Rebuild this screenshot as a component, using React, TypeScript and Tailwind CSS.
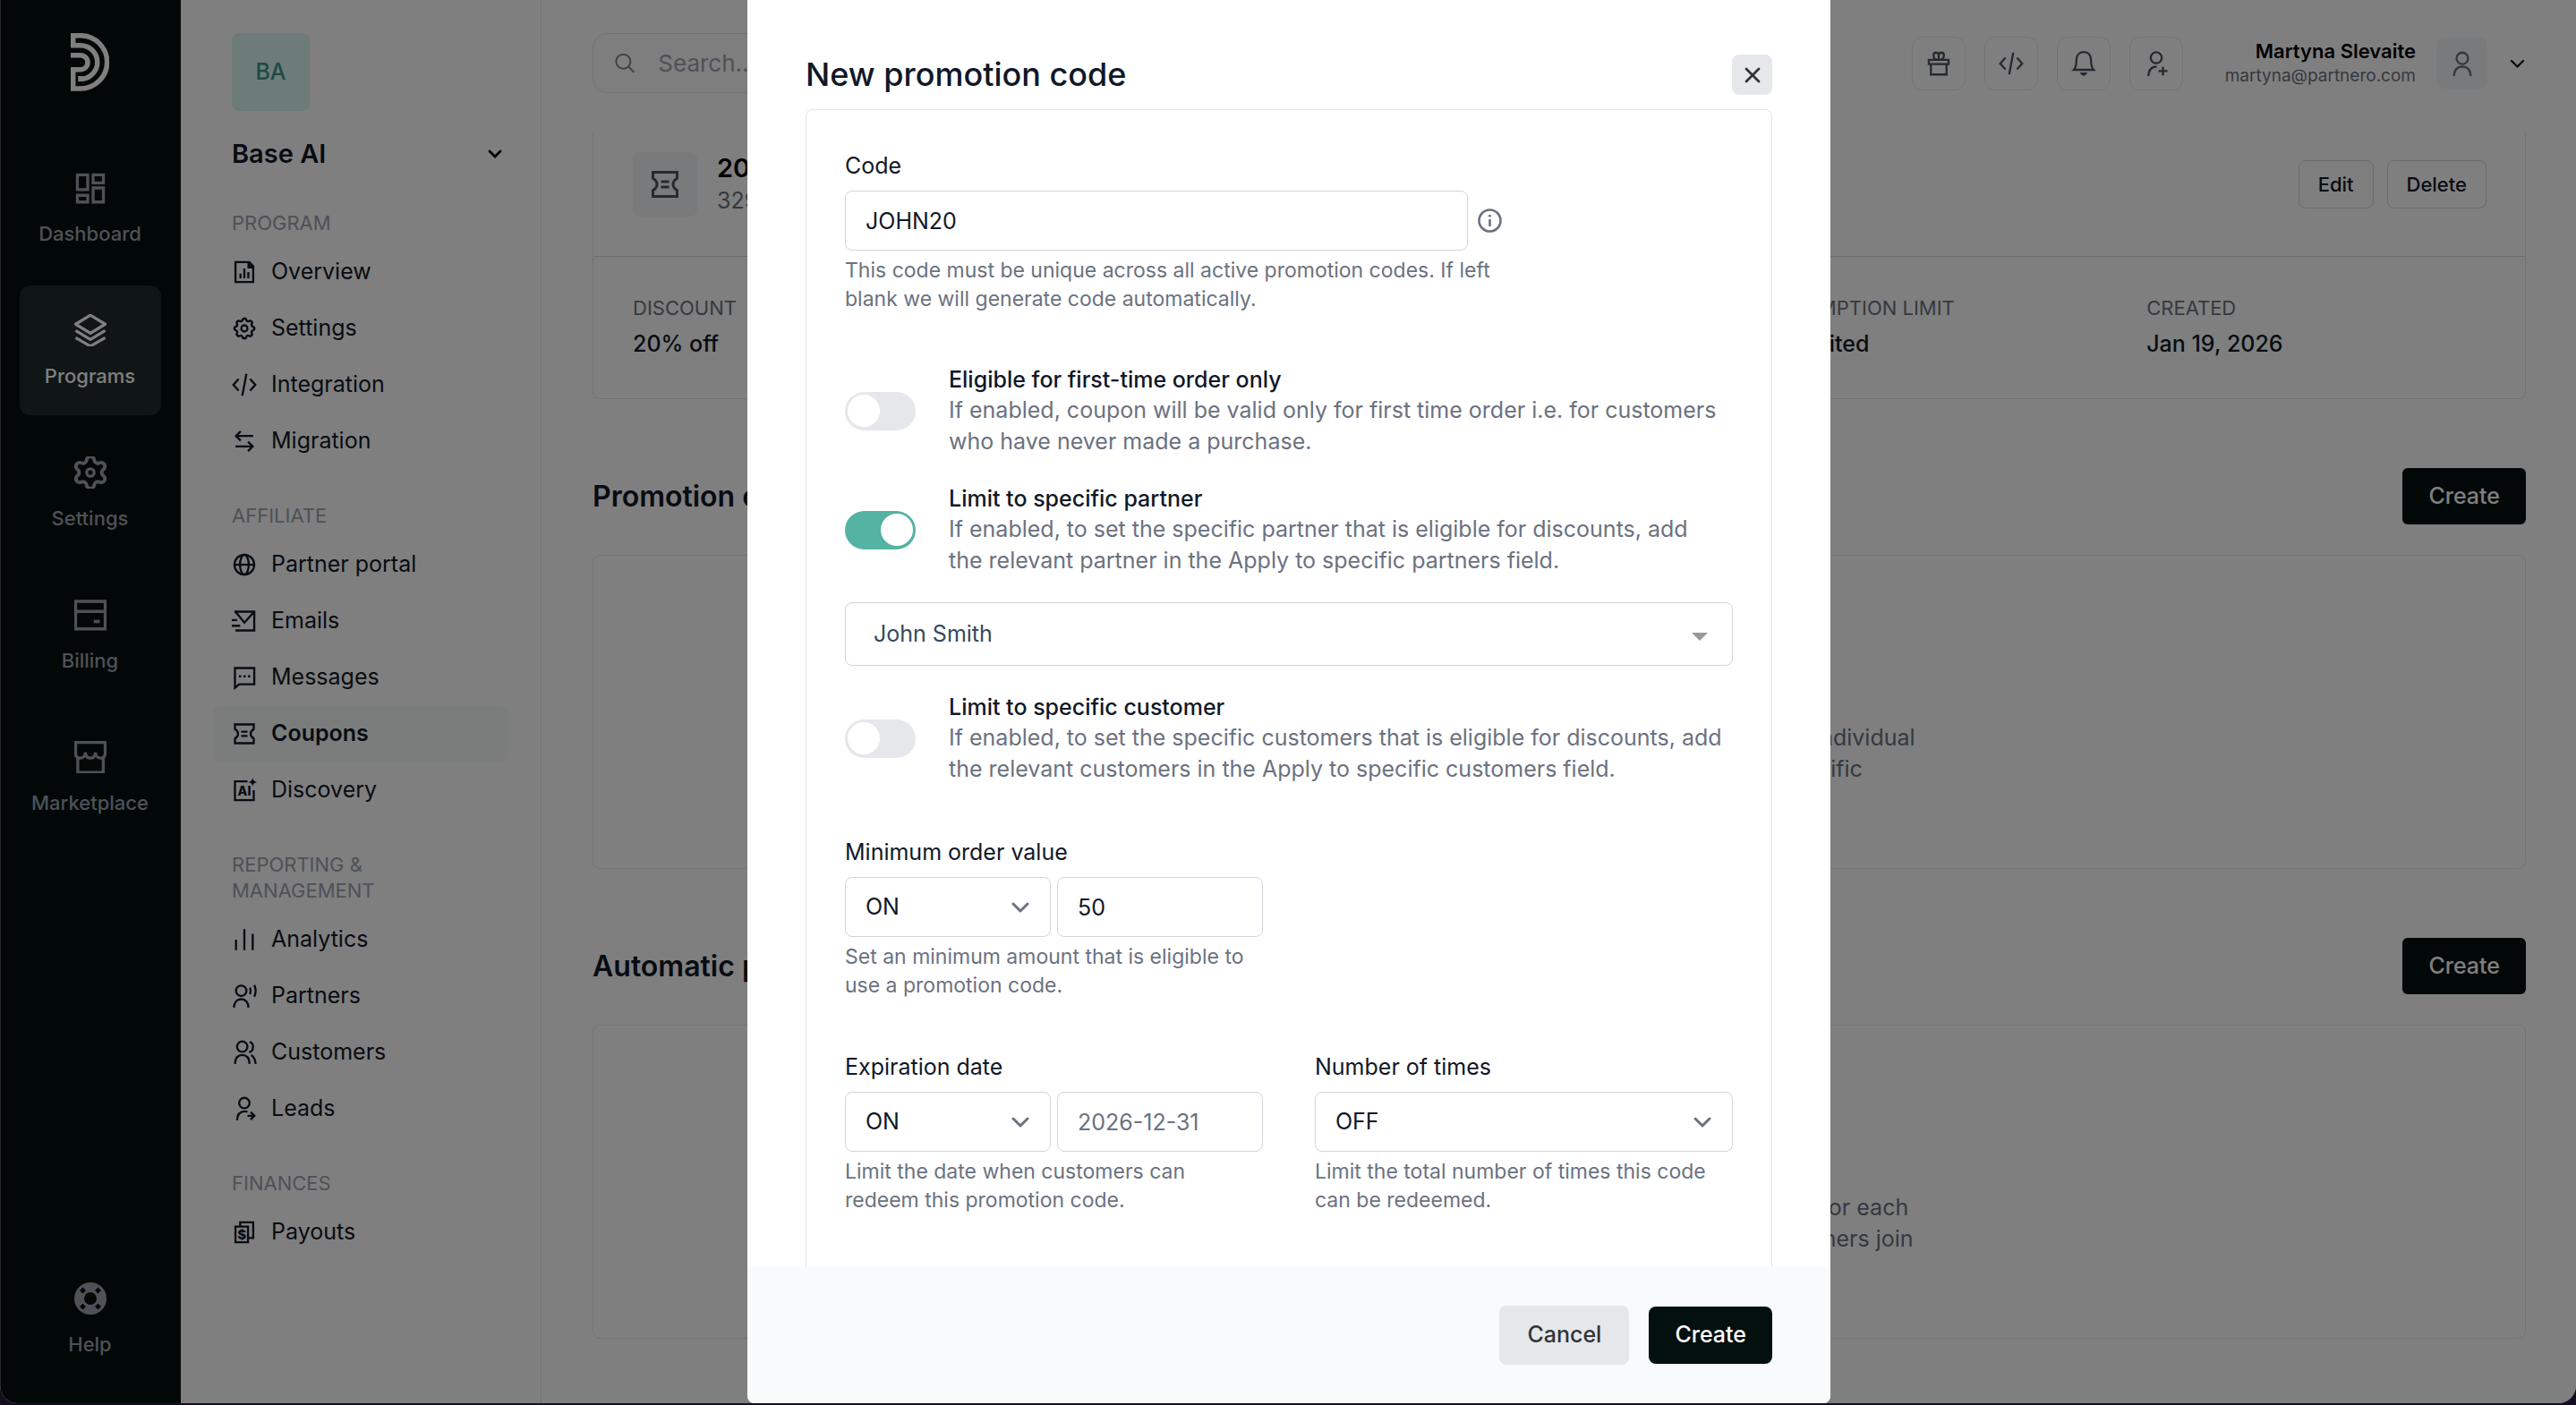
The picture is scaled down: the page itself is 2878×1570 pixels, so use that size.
import { useId, useState } from "react";
import type { ReactNode } from "react";

type IconProps = { children: ReactNode; size?: string; width?: number };

const Icon = ({ children, size = "size-7", width = 2 }: IconProps) => (
  <svg
    viewBox="0 0 24 24"
    fill="none"
    stroke="currentColor"
    strokeWidth={width}
    className={`${size} shrink-0`}
    aria-hidden="true"
  >
    {children}
  </svg>
);

const ticket = (
  <>
    <path d="M3 3h18v4.5c-2.200 1.300-3 2.700-3 4.500s.8 3.200 3 4.500V21H3v-4.500c2.200-1.300 3-2.700 3-4.500s-.8-3.200-3-4.500z" />
    <path d="M9 10h6M9 14h6" />
  </>
);

const code = <path d="m6.500 6.500-5 5.500 5 5.500M17.500 6.500l5 5.500-5 5.500M14 1.500 10 22.500" />;

const icons = {
  overview: (
    <>
      <path d="M3.500 2.500h13.300l3.700 3.800v15.200h-17z" />
      <path d="M16 2.500v5h4.500" fill="currentColor" />
      <path d="M8.300 13.500V18M12 8.500V18M15.800 12v6" />
    </>
  ),
  settings: (
    <>
      <path
        d="M10.325 4.317c.426 -1.756 2.924 -1.756 3.35 0a1.724 1.724 0 0 0 2.573 1.066c1.543 -.94 3.31 .826 2.37 2.37a1.724 1.724 0 0 0 1.065 2.572c1.756 .426 1.756 2.924 0 3.35a1.724 1.724 0 0 0 -1.066 2.573c.94 1.543 -.826 3.31 -2.37 2.37a1.724 1.724 0 0 0 -2.572 1.065c-.426 1.756 -2.924 1.756 -3.35 0a1.724 1.724 0 0 0 -2.573 -1.066c-1.543 .94 -3.31 -.826 -2.37 -2.37a1.724 1.724 0 0 0 -1.065 -2.572c-1.756 -.426 -1.756 -2.924 0 -3.35a1.724 1.724 0 0 0 1.066 -2.573c-.94 -1.543 .826 -3.31 2.37 -2.37c1 .608 2.296 .07 2.572 -1.065z"
        transform="translate(-.8 -.8) scale(1.07)"
      />
      <circle cx="12" cy="12" r="3" />
    </>
  ),
  code,
  migration: <path d="M20.500 7H4M8.500 2.500 4 7l4.500 4.500M3.500 17H20M15.500 12.500 20 17l-4.500 4.500" />,
  globe: (
    <>
      <circle cx="12" cy="12" r="9.500" />
      <ellipse cx="12" cy="12" rx="4.200" ry="9.500" />
      <path d="M2.500 12h19" />
    </>
  ),
  emails: (
    <>
      <path d="M3.500 3h18v18h-18M3.500 3 12 13.500 21.500 3M0 11h5M0 16.500h8" />
      <path d="M3.500 2v2.500" />
    </>
  ),
  messages: (
    <>
      <path d="M3 3h18.500v15.500H7L3 22z" />
      <path d="M6.800 11h2.200M11.100 11h2.200M15.400 11h2.200" strokeWidth="2.200" />
    </>
  ),
  coupons: ticket,
  discovery: (
    <>
      <path d="M15 3.500H3v18h18V12" />
      <path
        d="M20 0c.4 2.600 1.400 3.600 4 4.200-2.600.6-3.600 1.600-4 4.200-.4-2.600-1.400-3.600-4-4.200 2.600-.6 3.600-1.600 4-4.200z"
        fill="currentColor"
        stroke="none"
      />
      <text x="12" y="17" fontSize="12" fontWeight="800" textAnchor="middle" fill="currentColor" stroke="none">
        AI
      </text>
    </>
  ),
  analytics: <path d="M4 12v10M12 2v20M20 6.500V22" />,
  partners: (
    <>
      <circle cx="9" cy="7" r="5" />
      <path d="M2 23c.3-5 3-8 7-8s6.700 3 7 8" />
      <path d="M17.300 4c.9 2 .9 4.300 0 6.300M21.500 1.500c1.700 3.600 1.700 7.500 0 11.200" />
    </>
  ),
  customers: (
    <>
      <circle cx="10" cy="6.500" r="5" />
      <path d="M3 23c.3-5.500 3-8.500 7-8.500s6.700 3 7 8.500M17 2c4.500 1 4.500 8.500-.5 10M18.500 14.500c2.500 1.500 4 4.500 4.300 8.500" />
    </>
  ),
  leads: (
    <>
      <circle cx="12" cy="6.500" r="5" />
      <path d="M5 23c.3-5.500 3-8.500 7.500-8.500 1 0 1.700.2 2.500.5M15 18.700h6.500M18 15l3.700 3.700L18 22.400" />
    </>
  ),
  payouts: (
    <>
      <path d="M3.500 6.500h12v15h-12z" />
      <path d="M8 6.500v-4h12.500v15h-5" />
      <text x="9.600" y="18.600" fontSize="13" fontWeight="800" textAnchor="middle" fill="currentColor" stroke="none">
        $
      </text>
    </>
  ),
};

const railItems = [
  {
    label: "Dashboard",
    icon: <path d="M2.300 2.300H10v11H2.300zM14 2.300h7.700v6H14zM2.300 17.500H10v5H2.300zM14 12h7.700v10.500H14z" />,
  },
  {
    label: "Programs",
    active: true,
    icon: (
      <path
        d="m12 .8 11 6.700-11 6.700L1 7.500zM1 12.300l11 6.600 11-6.600M1 17.600l11 6.300 11-6.300"
        strokeLinejoin="round"
      />
    ),
  },
  {
    label: "Settings",
    icon: (
      <>
        <path
          d="M9.671 4.136a2.340 2.340 0 0 1 4.659 0 2.340 2.340 0 0 0 3.319 1.915 2.340 2.340 0 0 1 2.330 4.033 2.340 2.340 0 0 0 0 3.831 2.340 2.340 0 0 1-2.330 4.033 2.340 2.340 0 0 0-3.319 1.915 2.340 2.340 0 0 1-4.659 0 2.340 2.340 0 0 0-3.320-1.915 2.340 2.340 0 0 1-2.330-4.033 2.340 2.340 0 0 0 0-3.831A2.340 2.340 0 0 1 6.350 6.051a2.340 2.340 0 0 0 3.319-1.915"
          transform="translate(-2.400 -2.400) scale(1.200)"
        />
        <circle cx="12" cy="12" r="2.800" />
      </>
    ),
  },
  {
    label: "Billing",
    icon: (
      <>
        <path d="M1 2h22v20.500H1zM1 9.500h22" />
        <path d="M14.500 17h4.500" strokeWidth="2.400" />
      </>
    ),
  },
  {
    label: "Marketplace",
    icon: (
      <path d="M1 1h22v8c0 2.600-1.300 3.800-3.300 3.800-2.300 0-3.800-1.700-3.900-4.300-.2 2.600-1.500 4.300-3.800 4.300S8.400 11.100 8.200 8.500c-.1 2.600-1.600 4.300-3.900 4.300C2.300 12.800 1 11.600 1 9zM2.600 12.800V23.500h19V12.800" />
    ),
  },
];

const sections = [
  {
    title: "PROGRAM",
    links: [
      { label: "Overview", icon: icons.overview },
      { label: "Settings", icon: icons.settings },
      { label: "Integration", icon: icons.code },
      { label: "Migration", icon: icons.migration },
    ],
  },
  {
    title: "AFFILIATE",
    links: [
      { label: "Partner portal", icon: icons.globe },
      { label: "Emails", icon: icons.emails },
      { label: "Messages", icon: icons.messages },
      { label: "Coupons", icon: icons.coupons, active: true },
      { label: "Discovery", icon: icons.discovery },
    ],
  },
  {
    title: "REPORTING & MANAGEMENT",
    links: [
      { label: "Analytics", icon: icons.analytics },
      { label: "Partners", icon: icons.partners },
      { label: "Customers", icon: icons.customers },
      { label: "Leads", icon: icons.leads },
    ],
  },
  {
    title: "FINANCES",
    links: [{ label: "Payouts", icon: icons.payouts }],
  },
];

const stats = [
  ["DISCOUNT", "20% off"],
  ["DURATION", "Forever"],
  ["REDEMPTIONS", "0"],
  ["REDEMPTION LIMIT", "Unlimited"],
  ["CREATED", "Jan 19, 2026"],
];

const topActions = [
  {
    label: "What's new",
    icon: (
      <>
        <path d="M2.500 8.500h19v4h-19zM4.500 12.500h15v10h-15z" />
        <path d="M12 8.500v-4C12 2.500 11 1.500 9.500 1.500S7 2.600 7 4.200c0 2.600 2 4.300 5 4.300zM12 8.500v-4c0-2 1-3 2.500-3S17 2.600 17 4.200c0 2.600-2 4.300-5 4.300z" />
      </>
    ),
  },
  { label: "Developers", icon: code },
  {
    label: "Notifications",
    icon: (
      <>
        <path d="M2.500 18c2-2 2.500-4.500 2.500-9 0-5 2.800-8 7-8s7 3 7 8c0 4.500.5 7 2.500 9z" />
        <path d="M10 21.500c.8 1.700 3.200 1.700 4 0z" fill="currentColor" />
      </>
    ),
  },
  {
    label: "Invite user",
    icon: (
      <>
        <circle cx="12" cy="6.500" r="5.300" />
        <path d="M4.500 24c.3-6 3-9 8-9M18.500 15v8.500M14.200 19.200h8.600" />
      </>
    ),
  },
];

const Rail = () => (
  <nav className="flex w-[202px] shrink-0 flex-col items-center border-l border-[#555] bg-[#04100e] pt-[37px] pr-[2px] pb-[22px]">
    <svg viewBox="0 0 43 65" className="h-[65px] w-[43px]" fill="none" stroke="#fff" strokeWidth="5.500" aria-label="Partnero">
      <path d="M11 48v3.300a18.800 18.800 0 0 0 0-37.600H2.700V2.700H11a29.650 29.650 0 0 1 0 59.300H2.700V40.700H11a8 8 0 0 0 0-16H0" />
    </svg>
    <div className="mt-[58px] flex flex-col gap-[14px]">
      {railItems.map((item) => (
        <a
          key={item.label}
          href="#"
          className={`flex h-[145px] w-[158px] flex-col items-center gap-[18px] rounded-xl pt-8 text-[22px] leading-[30px] font-medium ${
            item.active ? "bg-[#1e2c2a] text-white" : "text-[#9ca3af]"
          }`}
        >
          <Icon size="size-9" width={2.2}>
            {item.icon}
          </Icon>
          {item.label}
        </a>
      ))}
    </div>
    <a
      href="#"
      className="mt-auto flex h-[145px] w-[158px] flex-col items-center gap-[18px] pt-8 text-[22px] leading-[30px] font-medium text-[#9ca3af]"
    >
      <svg viewBox="0 0 36 36" className="size-9" aria-hidden="true">
        <circle cx="18" cy="18" r="12.500" fill="none" stroke="currentColor" strokeWidth="11" />
        <path
          d="m9.500 5.500 3.500 3.500-3.500 3.500L6 9zM26.500 5.500 30 9l-3.500 3.500L23 9zM9.500 23.500 13 27l-3.500 3.500L6 27zM26.500 23.500 30 27l-3.500 3.500L23 27z"
          fill="#04100e"
        />
      </svg>
      Help
    </a>
  </nav>
);

const Sidebar = () => (
  <aside className="w-[403px] shrink-0 border-r border-[#e5e7eb] px-9 pt-[37px]">
    <div className="px-[21px]">
      <div className="flex size-[87px] items-center justify-center rounded-lg bg-[#daf8f2] font-medium text-[#3f9488]">
        BA
      </div>
    </div>
    <button className="mt-[30px] mb-[45px] flex w-full items-center justify-between pr-[7px] pl-[21px] text-[29px] leading-9 font-semibold">
      Base AI
      <svg viewBox="0 0 16 16" className="size-4" fill="none" stroke="#000" strokeWidth="2.800" strokeLinecap="round" aria-hidden="true">
        <path d="m2 5 6 6 6-6" />
      </svg>
    </button>
    <div className="flex flex-col gap-[38px]">
      {sections.map((section) => (
        <section key={section.title}>
          <h2 className="mb-2 w-[240px] px-[21px] text-[22px] leading-[29px] text-[#9ca3af]">{section.title}</h2>
          {section.links.map((link) => (
            <a
              key={link.label}
              href="#"
              className={`flex h-[63px] items-center gap-4 rounded-lg px-[21px] ${
                link.active ? "bg-[#f7fafa] font-semibold" : ""
              }`}
            >
              <Icon>{link.icon}</Icon>
              {link.label}
            </a>
          ))}
        </section>
      ))}
    </div>
  </aside>
);

const TopBar = () => (
  <header className="flex h-[147px] items-start pt-[37px]">
    <label className="flex h-[67px] w-[500px] items-center gap-[26px] rounded-2xl border border-[#e5e7eb] bg-[#fcfcfd] px-6 text-[26px] text-[#9ca3af]">
      <svg viewBox="0 0 25 25" className="size-[25px]" fill="none" stroke="#7d8490" strokeWidth="2.200" aria-hidden="true">
        <circle cx="10.500" cy="10.500" r="9" />
        <path d="m17 17 7 7" />
      </svg>
      <input
        type="search"
        aria-label="Search"
        placeholder="Search..."
        className="w-full bg-transparent outline-none placeholder:text-[#9ca3af]"
      />
    </label>
    <div className="ml-auto flex h-[67px] items-center">
      <div className="flex gap-[21px]">
        {topActions.map((action) => (
          <button
            key={action.label}
            aria-label={action.label}
            className="flex size-[60px] items-center justify-center rounded-xl border border-[#e5e7eb] text-[#4b5563]"
          >
            <Icon>{action.icon}</Icon>
          </button>
        ))}
      </div>
      <div className="ml-[47px] text-right">
        <div className="text-[22px] leading-7 font-semibold text-black">Martyna Slevaite</div>
        <div className="text-[19px] leading-7 text-[#6b7280]">martyna@partnero.com</div>
      </div>
      <button aria-label="Account" className="ml-[23px] flex items-center gap-[23px]">
        <span className="flex size-[57px] items-center justify-center rounded-lg bg-[#f3f4f6] text-[#6b7280]">
          <Icon>
            <circle cx="12" cy="7" r="5.500" />
            <path d="M4 24c.3-6 3.300-9 8-9s7.700 3 8 9" />
          </Icon>
        </span>
        <svg viewBox="0 0 20 20" className="size-5" fill="none" stroke="#000" strokeWidth="2.200" strokeLinecap="round" aria-hidden="true">
          <path d="m4 7 6.500 6.500L17 7" />
        </svg>
      </button>
    </div>
  </header>
);

const EmptySection = ({ title, lines }: { title: string; lines: string[] }) => (
  <section className="mt-[77px]">
    <div className="flex items-center justify-between">
      <h2 className="text-[32px] leading-10 font-semibold">{title}</h2>
      <button className="h-[63px] rounded-md bg-[#04100e] px-[29px] font-medium text-white">Create</button>
    </div>
    <div className="mt-[34px] flex h-[351px] flex-col items-center rounded-lg border border-[#e5e7eb] pt-[186px] leading-[35px] text-[#6b7280]">
      {lines.map((line) => (
        <p key={line}>{line}</p>
      ))}
    </div>
  </section>
);

const Chevron = () => (
  <svg
    viewBox="0 0 20 20"
    className="pointer-events-none absolute top-1/2 right-[14px] size-10 -translate-y-1/2"
    fill="none"
    stroke="#6b7280"
    strokeWidth="1.500"
    strokeLinecap="round"
    strokeLinejoin="round"
    aria-hidden="true"
  >
    <path d="m6 8 4 4 4-4" />
  </svg>
);

const SwitchSelect = ({ id, value }: { id: string; value: string }) => (
  <div className="relative">
    <select
      id={id}
      defaultValue={value}
      className="h-[67px] w-full appearance-none rounded-lg border border-[#d1d5db] bg-white px-[22px]"
    >
      <option>ON</option>
      <option>OFF</option>
    </select>
    <Chevron />
  </div>
);

const textInput = "h-[67px] w-full min-w-0 rounded-lg border border-[#d1d5db] bg-white px-[22px] placeholder:text-[#6b7280]";

const Field = ({ id, label, help, children }: { id: string; label: string; help: string; children: ReactNode }) => (
  <div>
    <label htmlFor={id} className="mb-[10px] block leading-9">
      {label}
    </label>
    {children}
    <p className="mt-[6px] text-[23px] leading-8 text-[#6b7280]">{help}</p>
  </div>
);

type ToggleProps = { title: string; text: string; checked: boolean; onChange: (value: boolean) => void };

const Toggle = ({ title, text, checked, onChange }: ToggleProps) => {
  const id = useId();
  return (
    <div className="flex items-center gap-[37px]">
      <input
        id={id}
        type="checkbox"
        role="switch"
        checked={checked}
        onChange={(e) => onChange(e.target.checked)}
        className="flex h-[43px] w-[79px] shrink-0 appearance-none items-center rounded-full bg-[#e5e7eb] px-[3px] before:size-9 before:rounded-full before:bg-white checked:justify-end checked:bg-[#54b3a3]"
      />
      <div className="pr-[10px]">
        <label htmlFor={id} className="block leading-[34px] font-medium">
          {title}
        </label>
        <p className="leading-[35px] text-[#6b7280]">{text}</p>
      </div>
    </div>
  );
};

const PromotionModal = () => {
  const [firstOrder, setFirstOrder] = useState(false);
  const [partner, setPartner] = useState(true);
  const [customer, setCustomer] = useState(false);

  return (
    <div
      role="dialog"
      aria-modal="true"
      aria-labelledby="modal-title"
      className="flex h-full w-[1210px] flex-col overflow-hidden rounded-b-lg bg-white"
    >
      <div className="flex items-center justify-between px-[65px] pt-[61px] pb-4">
        <h1 id="modal-title" className="text-[36px] leading-[45px] font-medium">
          New promotion code
        </h1>
        <button aria-label="Close" className="flex size-[45px] items-center justify-center rounded-lg bg-[#e5e7eb]">
          <svg viewBox="0 0 18 18" className="size-[18px]" fill="none" stroke="#333" strokeWidth="2.800" strokeLinecap="round" aria-hidden="true">
            <path d="m2 2 14 14M16 2 2 16" />
          </svg>
        </button>
      </div>

      <div className="mx-[65px] flex min-h-0 flex-1 flex-col gap-[57px] overflow-hidden rounded-t-lg border border-b-0 border-[#e5e7eb] px-[43px] pt-11">
        <div className="w-[734px]">
          <Field
            id="code"
            label="Code"
            help="This code must be unique across all active promotion codes. If left blank we will generate code automatically."
          >
            <div className="flex items-center gap-[11px]">
              <input id="code" defaultValue="JOHN20" className={textInput} />
              <svg viewBox="0 0 27 27" className="size-[27px] shrink-0" fill="none" stroke="#6b7280" strokeWidth="2.600" aria-hidden="true">
                <circle cx="13.500" cy="13.500" r="12" />
                <path d="M13.500 12v8M13.500 7v2.600" />
              </svg>
            </div>
          </Field>
        </div>

        <div className="flex flex-col gap-[29px]">
          <Toggle
            title="Eligible for first-time order only"
            text="If enabled, coupon will be valid only for first time order i.e. for customers who have never made a purchase."
            checked={firstOrder}
            onChange={setFirstOrder}
          />
          <Toggle
            title="Limit to specific partner"
            text="If enabled, to set the specific partner that is eligible for discounts, add the relevant partner in the Apply to specific partners field."
            checked={partner}
            onChange={setPartner}
          />
          <div className="relative">
            <select
              aria-label="Partner"
              className="h-[71px] w-full appearance-none rounded-lg border border-[#d1d5db] bg-white px-[31px] text-[#35495e]"
            >
              <option>John Smith</option>
            </select>
            <span className="pointer-events-none absolute top-[34px] right-[28px] border-x-[9px] border-t-[9px] border-x-transparent border-t-[#999]" />
          </div>
          <Toggle
            title="Limit to specific customer"
            text="If enabled, to set the specific customers that is eligible for discounts, add the relevant customers in the Apply to specific customers field."
            checked={customer}
            onChange={setCustomer}
          />
        </div>

        <div className="grid grid-cols-2 gap-x-[58px] gap-y-[57px]">
          <div className="col-span-2 grid grid-cols-2 gap-x-[58px]">
            <Field
              id="minimum"
              label="Minimum order value"
              help="Set an minimum amount that is eligible to use a promotion code."
            >
              <div className="grid grid-cols-2 gap-[7px]">
                <SwitchSelect id="minimum" value="ON" />
                <input aria-label="Minimum amount" defaultValue="50" className={textInput} />
              </div>
            </Field>
          </div>
          <Field
            id="expiration"
            label="Expiration date"
            help="Limit the date when customers can redeem this promotion code."
          >
            <div className="grid grid-cols-2 gap-[7px]">
              <SwitchSelect id="expiration" value="ON" />
              <input aria-label="Date" placeholder="2026-12-31" className={textInput} />
            </div>
          </Field>
          <Field
            id="times"
            label="Number of times"
            help="Limit the total number of times this code can be redeemed."
          >
            <SwitchSelect id="times" value="OFF" />
          </Field>
        </div>
      </div>

      <div className="flex h-[152px] shrink-0 items-center justify-end gap-[22px] bg-[#f9fafb] px-[65px] font-medium">
        <button className="h-[66px] rounded-lg bg-[#e5e7eb] px-[31px] text-[#333]">Cancel</button>
        <button className="h-16 rounded-lg bg-[#04100e] px-[29px] text-white">Create</button>
      </div>
    </div>
  );
};

const App = () => (
  <div className="h-screen overflow-hidden bg-[#150e20] pb-[2px] font-['Inter',sans-serif] text-[25px] text-[#111827]">
    <div className="relative flex h-full overflow-hidden rounded-b-[20px] bg-white">
      <Rail />
      <Sidebar />
      <main className="min-w-0 flex-1 pr-14 pl-[57px]">
        <TopBar />
        <section className="rounded-b-lg border border-t-0 border-[#e5e7eb]">
          <div className="flex items-center border-b border-[#d9dbdf] pt-[23px] pr-[43px] pb-[44px] pl-11">
            <div className="flex size-[72px] items-center justify-center rounded-lg bg-[#f3f4f6] text-[#4b5563]">
              <Icon size="size-9">{ticket}</Icon>
            </div>
            <div className="ml-[22px] leading-9">
              <h1 className="text-[29px] leading-9 font-semibold text-black">20% off</h1>
              <p className="text-[#6b7280]">32958</p>
            </div>
            <div className="ml-auto flex gap-[15px] text-[22px] font-medium">
              <button className="h-[54px] rounded-lg border border-[#d1d5db] px-[21px]">Edit</button>
              <button className="h-[54px] rounded-lg border border-[#d1d5db] px-[21px]">Delete</button>
            </div>
          </div>
          <dl className="grid grid-cols-5 pt-[42px] pb-[43px] pl-11">
            {stats.map(([name, value]) => (
              <div key={name}>
                <dt className="mb-[7px] text-[22px] leading-[30px] text-[#6b7280]">{name}</dt>
                <dd className="leading-9 font-medium">{value}</dd>
              </div>
            ))}
          </dl>
        </section>
        <EmptySection
          title="Promotion codes"
          lines={[
            "Make a customer-facing promotion code to share with an individual",
            "customer, or tie it with a partner who is running a specific",
          ]}
        />
        <EmptySection
          title="Automatic promotion codes"
          lines={[
            "Turn on automatic promotion codes to create a new code for each",
            "partner within your program at the moment when new partners join",
          ]}
        />
      </main>

      {/* backdrop with the dialog over it */}
      <div className="absolute inset-0 flex justify-center bg-black/50 pl-[2px]">
        <PromotionModal />
      </div>
    </div>
  </div>
);

export default App;
